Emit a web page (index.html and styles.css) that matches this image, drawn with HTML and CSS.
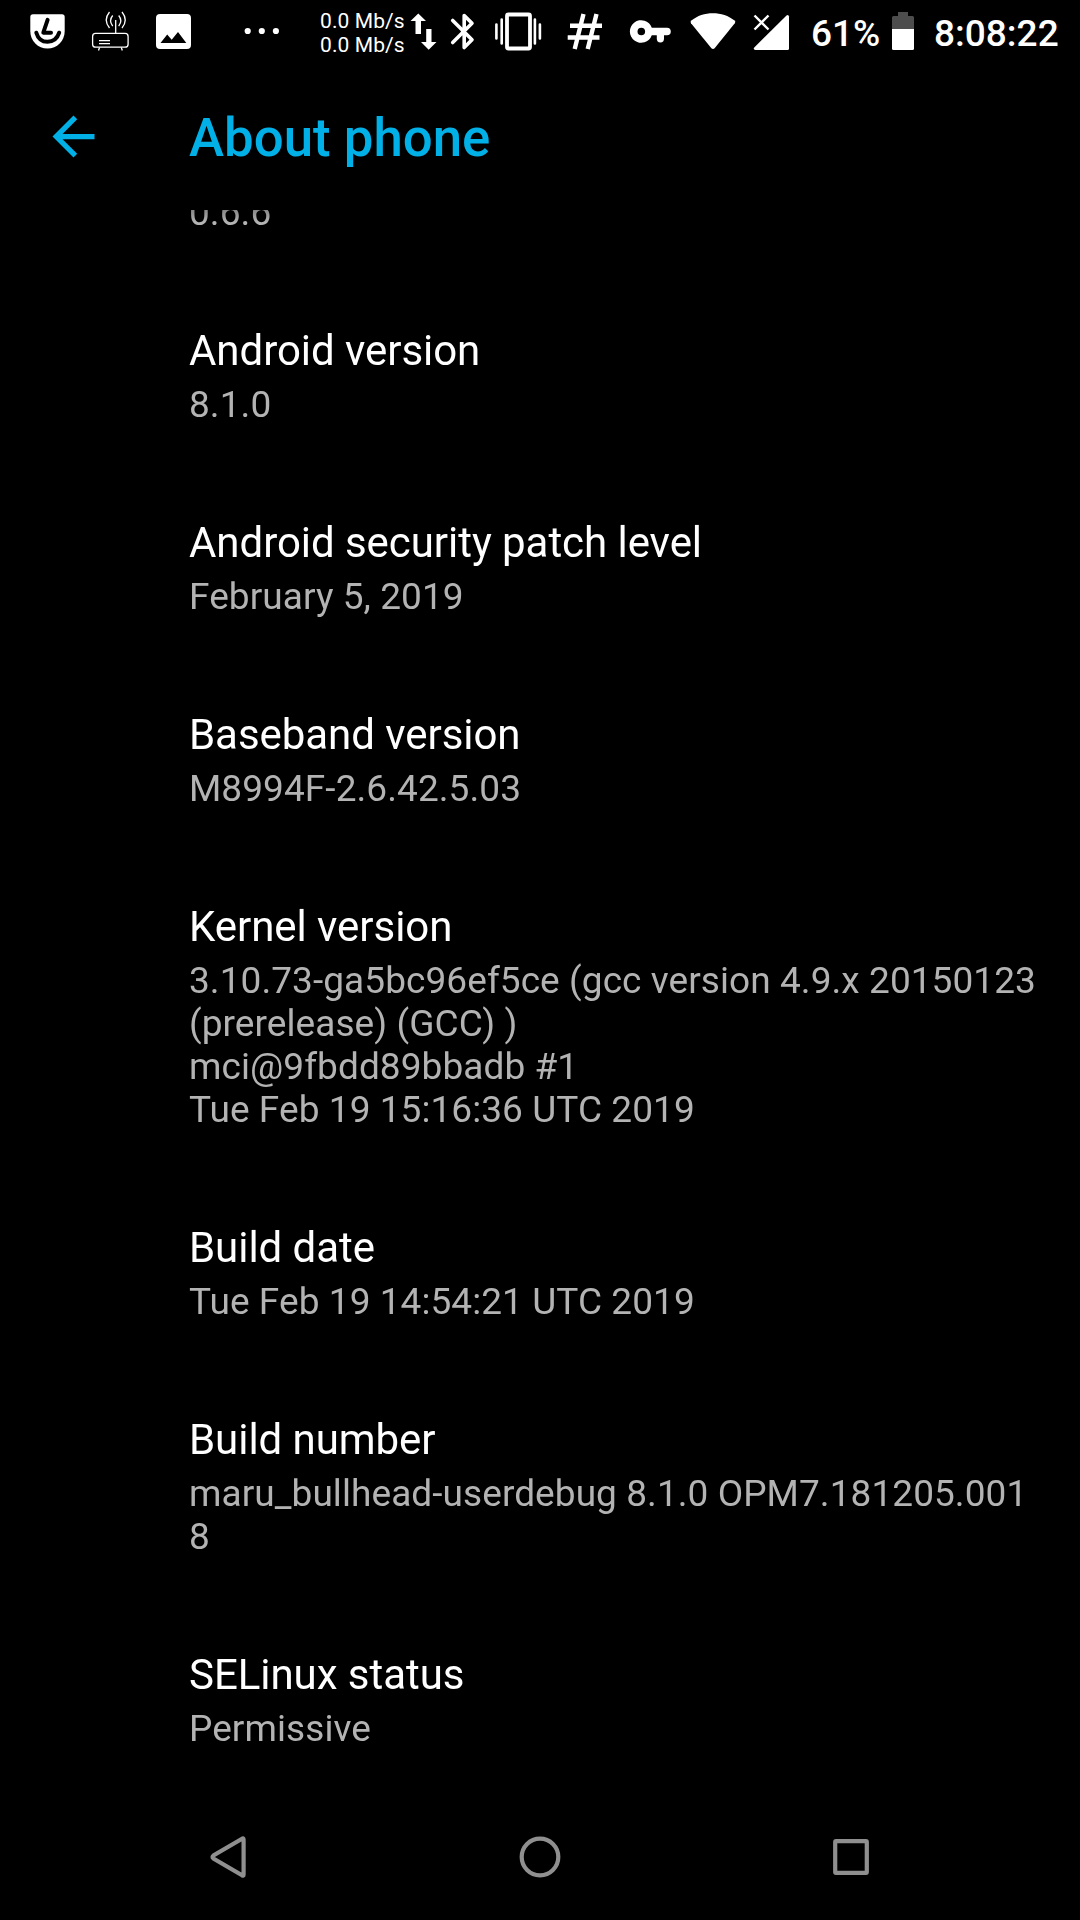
FILE: index.html
```html
<!DOCTYPE html>
<html lang="en">
<head>
<meta charset="utf-8">
<title>About phone</title>
<link rel="stylesheet" href="styles.css">
</head>
<body>
<div class="screen">
  <header class="status-bar">
    <svg class="icon" width="80" height="63" viewBox="0 0 80 63">
      <path fill="#fff" d="M33 14.300H62Q64.700 14.300 64.700 17V31C64.700 41 57 48.600 47.500 48.600S30.300 41 30.300 31V17Q30.300 14.300 33 14.300Z"/>
      <path class="cut" d="M47.600 19.800 43.300 32.700H51M36.300 32.700C38 38.500 42 41.800 47.500 41.800S57.300 38.500 59.200 32.700"/>
    </svg>
    <svg class="icon" width="60" height="63" viewBox="80 0 60 63">
      <g class="thin">
        <rect x="92.600" y="33.400" width="35.500" height="13.800" rx="3"/>
        <path d="M115.700 20V33M99 40.700H110M99 43.700H110M99.500 47.500 98.500 50.500M121.300 47.500 122.300 50.500M112.700 15.500Q108.500 20.500 112.700 26.200M118.700 15.500Q122.900 20.500 118.700 26.200M109.500 12Q103 20 109.500 28M122 12Q128.500 20 122 28"/>
      </g>
    </svg>
    <svg class="icon" width="100" height="63" viewBox="140 0 100 63">
      <path fill="#fff" fill-rule="evenodd" d="M160 14H187Q191 14 191 18V45Q191 49 187 49H160Q156 49 156 45V18Q156 14 160 14ZM160.500 43H186.300L178 32 171.700 39.700 167.200 34.500Z"/>
    </svg>
    <svg class="icon" width="80" height="63" viewBox="240 0 80 63">
      <g fill="#fff"><circle cx="247.700" cy="31" r="3.100"/><circle cx="261.800" cy="31" r="3.100"/><circle cx="275.900" cy="31" r="3.100"/></g>
    </svg>
    <div class="traffic"><span>0.0 Mb/s</span><span>0.0 Mb/s</span></div>
    <svg class="icon" width="37" height="63" viewBox="408 0 37 63">
      <path fill="#fff" d="M418.300 13.500 426 21H421V34H415.500V21H410.500ZM426.200 29H431.500V42H436.500L428.700 49.800 421 42H426.200Z"/>
    </svg>
    <svg class="icon" width="45" height="63" viewBox="445 0 45 63">
      <path class="bluetooth" d="M452.700 20.500 472 39.700 464.200 47.500V15.500L472 23.300 452.700 42.500"/>
    </svg>
    <svg class="icon" width="70" height="63" viewBox="490 0 70 63">
      <rect class="phone" x="507" y="14.500" width="23" height="34" rx="1.500"/>
      <path class="waves" d="M501.700 19.500V43.500M534.900 19.500V43.500M496.400 24.500V38.500M539.900 24.500V38.500"/>
    </svg>
    <svg class="icon" width="65" height="63" viewBox="560 0 65 63">
      <path class="hash" d="M583.500 14 574.700 49M596.500 14 587.700 49M570 25.800H602M567.700 37.500H599.500"/>
    </svg>
    <svg class="icon" width="60" height="63" viewBox="625 0 60 63">
      <path fill="#fff" fill-rule="evenodd" d="M651.800 27.700A11.300 11.300 0 1 0 651.800 35.300H656.800V38.800A3.600 3.600 0 0 0 664 38.800V35.300H667A3.800 3.800 0 0 0 667 27.700ZM641.300 27.700A3.800 3.800 0 1 1 641.300 35.300 3.800 3.800 0 0 1 641.300 27.700Z"/>
    </svg>
    <svg class="icon" width="63" height="63" viewBox="685 0 63 63">
      <path fill="#fff" d="M691.300 20.500C703 10.700 722.700 10.700 734.600 20.500Q736 21.800 734.800 23.300L714.600 48.300Q713 49.900 711.400 48.300L691 23.300Q690 21.800 691.300 20.500Z"/>
    </svg>
    <svg class="icon" width="63" height="63" viewBox="748 0 63 63">
      <path fill="#fff" d="M789 16.500V48.500Q789 50 787.500 50H755.500Q752.500 49.500 754.500 47.200L786.500 15.500Q788.500 14 789 16.500Z"/>
      <path class="cross" d="M754.500 15.500 768.500 29.500M768.500 15.500 754.500 29.500"/>
    </svg>
    <span class="percent">61%</span>
    <svg class="icon" width="47" height="63" viewBox="887 0 47 63">
      <path fill="#4d4d4d" d="M898 12H908V16H912.500Q914 16 914 17.500V29H892V17.500Q892 16 893.500 16H898Z"/>
      <path fill="#fff" d="M892 29H914V48.500Q914 50 912.500 50H893.500Q892 50 892 48.500Z"/>
    </svg>
    <span class="clock">8:08:22</span>
  </header>

  <div class="toolbar">
    <svg class="back" width="63" height="63" viewBox="0 0 24 24"><path d="M20 11H7.830l5.590-5.590L12 4l-8 8 8 8 1.410-1.410L7.830 13H20v-2z"/></svg>
    <h1 class="title">About phone</h1>
  </div>

  <main class="list">
    <section class="item clipped"><p class="summary">0.6.6</p></section>
    <section class="item"><h2 class="name">Android version</h2><p class="summary">8.1.0</p></section>
    <section class="item"><h2 class="name">Android security patch level</h2><p class="summary">February 5, 2019</p></section>
    <section class="item"><h2 class="name">Baseband version</h2><p class="summary">M8994F-2.6.42.5.03</p></section>
    <section class="item"><h2 class="name">Kernel version</h2><p class="summary">3.10.73-ga5bc96ef5ce (gcc version 4.9.x 20150123<br>(prerelease) (GCC) )<br>mci@9fbdd89bbadb #1<br>Tue Feb 19 15:16:36 UTC 2019</p></section>
    <section class="item"><h2 class="name">Build date</h2><p class="summary">Tue Feb 19 14:54:21 UTC 2019</p></section>
    <section class="item"><h2 class="name">Build number</h2><p class="summary">maru_bullhead-userdebug 8.1.0 OPM7.181205.001<br>8</p></section>
    <section class="item"><h2 class="name">SELinux status</h2><p class="summary">Permissive</p></section>
  </main>

  <nav class="nav-bar">
    <svg width="80" height="80" viewBox="0 0 80 80"><path d="M54.600 22.500V57.500Q54.600 59.500 53 58.300L24.400 41.500Q22.600 40 24.400 38.500L53 21.700Q54.600 20.500 54.600 22.500Z"/></svg>
    <svg width="80" height="80" viewBox="0 0 80 80"><circle cx="40" cy="40" r="18.300"/></svg>
    <svg width="80" height="80" viewBox="0 0 80 80"><rect x="24.200" y="24.200" width="31.600" height="31.600" rx=".8"/></svg>
  </nav>
</div>
</body>
</html>
```

FILE: styles.css
```css
* { box-sizing: border-box; margin: 0; padding: 0; }

body { background: #000; }

.screen {
  display: flex;
  flex-direction: column;
  width: 1080px;
  height: 1920px;
  overflow: hidden;
  background: #000;
  color: #fff;
  font-family: Roboto, "Liberation Sans", sans-serif;
}

.status-bar {
  display: flex;
  height: 63px;
  font-size: 37px;
  font-weight: 500;
  line-height: 43px;
  white-space: nowrap;
}

.icon { display: block; flex: none; }
.cut { fill: none; stroke: #000; stroke-width: 4; stroke-linecap: round; stroke-linejoin: round; }
.thin { fill: none; stroke: #fff; stroke-width: 1.3; }
.bluetooth { fill: none; stroke: #fff; stroke-width: 3.6; stroke-linecap: round; stroke-linejoin: round; }
.phone { fill: none; stroke: #fff; stroke-width: 3.8; }
.waves { fill: none; stroke: #fff; stroke-width: 2.6; stroke-linecap: round; }
.hash { fill: none; stroke: #fff; stroke-width: 4.4; }
.cross { fill: none; stroke: #fff; stroke-width: 2.4; }

.traffic {
  display: flex;
  flex: none;
  flex-direction: column;
  width: 88px;
  padding-top: 9px;
  font-size: 21px;
  font-weight: 400;
  letter-spacing: .1px;
  line-height: 24px;
}

.percent { flex: none; width: 76px; padding-top: 12px; }
.clock { flex: none; padding-top: 12px; }

.toolbar {
  display: flex;
  align-items: center;
  height: 147px;
  padding-left: 42px;
  gap: 84px;
}

.back { fill: #00b0e6; }

.title {
  padding-top: 2px;
  color: #00b0e6;
  font-size: 52.8px;
  font-weight: 500;
  line-height: 62px;
}

/* Rows scrolled under the toolbar fade out at the top edge. */
.list {
  display: flex;
  flex: 1;
  flex-direction: column;
  gap: 92px;
  padding-left: 189px;
  overflow: hidden;
  mask-image: linear-gradient(rgba(0, 0, 0, .75), #000 12px);
}

.item {
  display: flex;
  flex-direction: column;
  gap: 8px;
}

.clipped { margin-top: -19px; }

.name {
  font-size: 42px;
  font-weight: 400;
  letter-spacing: -.05px;
  line-height: 49px;
}

.summary {
  color: #b3b3b3;
  font-size: 37px;
  letter-spacing: .07px;
  line-height: 43px;
  white-space: nowrap;
}

.nav-bar {
  display: flex;
  flex: none;
  justify-content: space-between;
  align-items: center;
  height: 126px;
  padding: 0 189px;
}

.nav-bar svg {
  fill: none;
  stroke: #8f8f8f;
  stroke-width: 4.2;
}
```
